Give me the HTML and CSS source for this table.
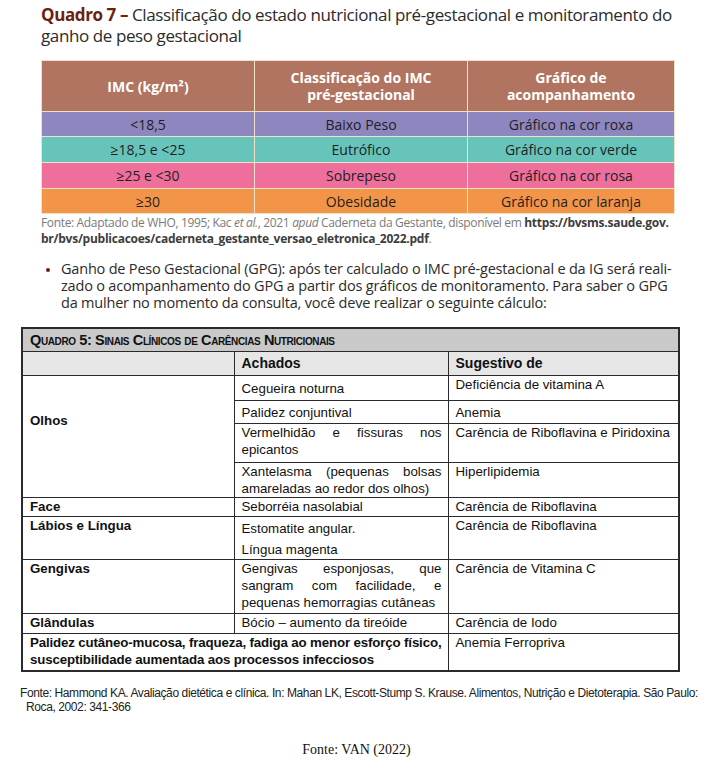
FILE: index.html
```html
<!DOCTYPE html>
<html lang="pt">
<head>
<meta charset="utf-8">
<title>Quadro 7</title>
<link rel="stylesheet" href="styles.css">
</head>
<body>
<div class="page">
  <section class="q7">
    <h1 class="q7-title"><span class="q7-label">Quadro 7 –</span> Classificação do estado nutricional pré-gestacional e monitoramento do<br>ganho de peso gestacional</h1>
    <table class="imc">
      <thead>
        <tr>
          <th>IMC (kg/m²)</th>
          <th>Classificação do IMC<br>pré-gestacional</th>
          <th>Gráfico de<br>acompanhamento</th>
        </tr>
      </thead>
      <tbody>
        <tr class="roxo r25"><td>&lt;18,5</td><td>Baixo Peso</td><td>Gráfico na cor roxa</td></tr>
        <tr class="verde r26"><td>≥18,5 e &lt;25</td><td>Eutrófico</td><td>Gráfico na cor verde</td></tr>
        <tr class="rosa r26"><td>≥25 e &lt;30</td><td>Sobrepeso</td><td>Gráfico na cor rosa</td></tr>
        <tr class="laranja r25"><td>≥30</td><td>Obesidade</td><td>Gráfico na cor laranja</td></tr>
      </tbody>
    </table>
    <p class="q7-source">Fonte: Adaptado de WHO, 1995; Kac <em>et al.</em>, 2021 <em>apud</em> Caderneta da Gestante, disponível em <strong>https://bvsms.saude.gov.<br>br/bvs/publicacoes/caderneta_gestante_versao_eletronica_2022.pdf</strong>.</p>
    <ul class="q7-list">
      <li>Ganho de Peso Gestacional (GPG): após ter calculado o IMC pré-gestacional e da IG será reali-<br>zado o acompanhamento do GPG a partir dos gráficos de monitoramento. Para saber o GPG<br>da mulher no momento da consulta, você deve realizar o seguinte cálculo:</li>
    </ul>
  </section>

  <section class="q5">
    <table class="sinais">
      <colgroup><col class="c1"><col class="c2"><col class="c3"></colgroup>
      <tr class="t-title"><td colspan="3">Quadro 5: Sinais Clínicos de Carências Nutricionais</td></tr>
      <tr class="t-head"><td></td><td>Achados</td><td>Sugestivo de</td></tr>
      <tr class="h25"><td rowspan="4" class="olhos b">Olhos</td><td>Cegueira noturna</td><td class="top">Deficiência de vitamina A</td></tr>
      <tr class="h23"><td>Palidez conjuntival</td><td>Anemia</td></tr>
      <tr class="h39"><td class="just">Vermelhidão e fissuras nos epicantos</td><td>Carência de Riboflavina e Piridoxina</td></tr>
      <tr class="h35"><td class="just">Xantelasma (pequenas bolsas amareladas ao redor dos olhos)</td><td>Hiperlipidemia</td></tr>
      <tr class="h19"><td class="b">Face</td><td>Seborréia nasolabial</td><td>Carência de Riboflavina</td></tr>
      <tr class="h43"><td class="b">Lábios e Língua</td><td class="para"><span>Estomatite angular.</span><span>Língua magenta</span></td><td>Carência de Riboflavina</td></tr>
      <tr class="h54"><td class="b">Gengivas</td><td class="just">Gengivas esponjosas, que sangram com facilidade, e pequenas hemorragias cutâneas</td><td>Carência de Vitamina C</td></tr>
      <tr class="h20"><td class="b">Glândulas</td><td>Bócio – aumento da tireóide</td><td>Carência de Iodo</td></tr>
      <tr class="h37"><td colspan="2" class="b nowrap">Palidez cutâneo-mucosa, fraqueza, fadiga ao menor esforço físico,<br>susceptibilidade aumentada aos processos infecciosos</td><td>Anemia Ferropriva</td></tr>
    </table>
    <p class="q5-source">Fonte: Hammond KA. Avaliação dietética e clínica. In: Mahan LK, Escott-Stump S. Krause. Alimentos, Nutrição e Dietoterapia. São Paulo:<br><span class="indent">Roca, 2002: 341-366</span></p>
  </section>

  <p class="fonte">Fonte: VAN (2022)</p>
</div>
</body>
</html>
```

FILE: styles.css
```css
html, body {
  margin: 0;
  padding: 0;
  background: #ffffff;
}

.page {
  width: 713px;
  padding-top: 4px;
}

/* ---------- Quadro 7 ---------- */
.q7 {
  padding-left: 41px;
  font-family: "Open Sans", sans-serif;
}

.q7-title {
  margin: 0;
  font-size: 17px;
  line-height: 21px;
  font-weight: 400;
  color: #2b2b2b;
  white-space: nowrap;
  letter-spacing: -0.4px;
}

.q7-label {
  font-weight: 700;
  color: #6e1f0d;
}

.imc {
  margin-top: 14px;
  width: 634px;
  border-collapse: collapse;
  table-layout: fixed;
  font-size: 14px;
  color: #1f1f1f;
  text-align: center;
}

.imc th,
.imc td {
  border: 1.5px solid #eee2c9;
  padding: 0;
}

.imc th {
  background: #b07460;
  color: #ffffff;
  font-weight: 700;
  font-size: 14px;
  line-height: 17px;
  height: 50px;
}

.imc th:nth-child(1) { width: 212px; }
.imc th:nth-child(2) { width: 212px; }

.imc .r25 td { height: 24px; }
.imc .r26 td { height: 25px; }

.roxo td { background: #8e86bf; }
.verde td { background: #66c4bb; }
.rosa td { background: #ee6e9c; }
.laranja td { background: #f29549; }

.q7-source {
  margin: 1px 0 0;
  font-size: 12px;
  line-height: 16px;
  color: #7a7a7a;
  white-space: nowrap;
  letter-spacing: -0.35px;
}

.q7-source strong {
  color: #3d3d3d;
  font-weight: 700;
  letter-spacing: -0.25px;
}

.q7-list {
  margin: 13px 0 0;
  padding-left: 20px;
  font-size: 14.5px;
  line-height: 17px;
  color: #2b2b2b;
  white-space: nowrap;
  letter-spacing: -0.2px;
}

.q7-list li::marker {
  color: #6e1f0d;
  font-size: 12px;
}

/* ---------- Quadro 5 ---------- */
.q5 {
  margin-top: 16px;
  padding-left: 21px;
  font-family: "Liberation Sans", Arial, sans-serif;
}

.sinais {
  width: 657px;
  border-collapse: collapse;
  table-layout: fixed;
  font-size: 13.3px;
  line-height: 17px;
  color: #111111;
  border: 2px solid #2a2a2a;
}

.sinais .c1 { width: 212px; }
.sinais .c2 { width: 214px; }
.sinais .c3 { width: 231px; }

.sinais td {
  border: 1.5px solid #2a2a2a;
  padding: 0 6px 0 7px;
  vertical-align: top;
}

.sinais .t-title td {
  background: #c9c9c9;
  height: 22px;
  vertical-align: middle;
  font-weight: 700;
  font-variant: small-caps;
  font-size: 14.6px;
  letter-spacing: -0.4px;
}

.sinais .t-head td {
  background: #e6e6e6;
  height: 23px;
  vertical-align: middle;
  font-weight: 700;
  font-size: 14px;
}

.sinais .b { font-weight: 700; }
.sinais .just { text-align: justify; }
.sinais .nowrap {
  white-space: nowrap;
  letter-spacing: -0.15px;
}

.sinais td.olhos {
  vertical-align: middle;
  padding-bottom: 32px;
}

.sinais .para span {
  display: block;
  padding-top: 3px;
}
.sinais .para span + span { padding-top: 4px; }

.sinais .h19 td { height: 18px; }
.sinais .h20 td { height: 19px; }
.sinais .h23 td { height: 22px; vertical-align: middle; }
.sinais .h25 td { height: 24px; vertical-align: middle; }
.sinais .h25 td.top { vertical-align: top; }
.sinais .h35 td { height: 34px; }
.sinais .h37 td { height: 36px; }
.sinais .h39 td { height: 38px; }
.sinais .h43 td { height: 42px; }
.sinais .h54 td { height: 53px; }

.q5-source {
  margin: 14px 0 0;
  margin-left: -1px;
  font-size: 12px;
  line-height: 14px;
  color: #222222;
  white-space: nowrap;
  letter-spacing: -0.4px;
}

.q5-source .indent {
  padding-left: 6px;
}

.fonte {
  margin: 28px 0 0;
  text-align: center;
  font-family: "Liberation Serif", "Times New Roman", serif;
  font-size: 14px;
  color: #111111;
}
```
